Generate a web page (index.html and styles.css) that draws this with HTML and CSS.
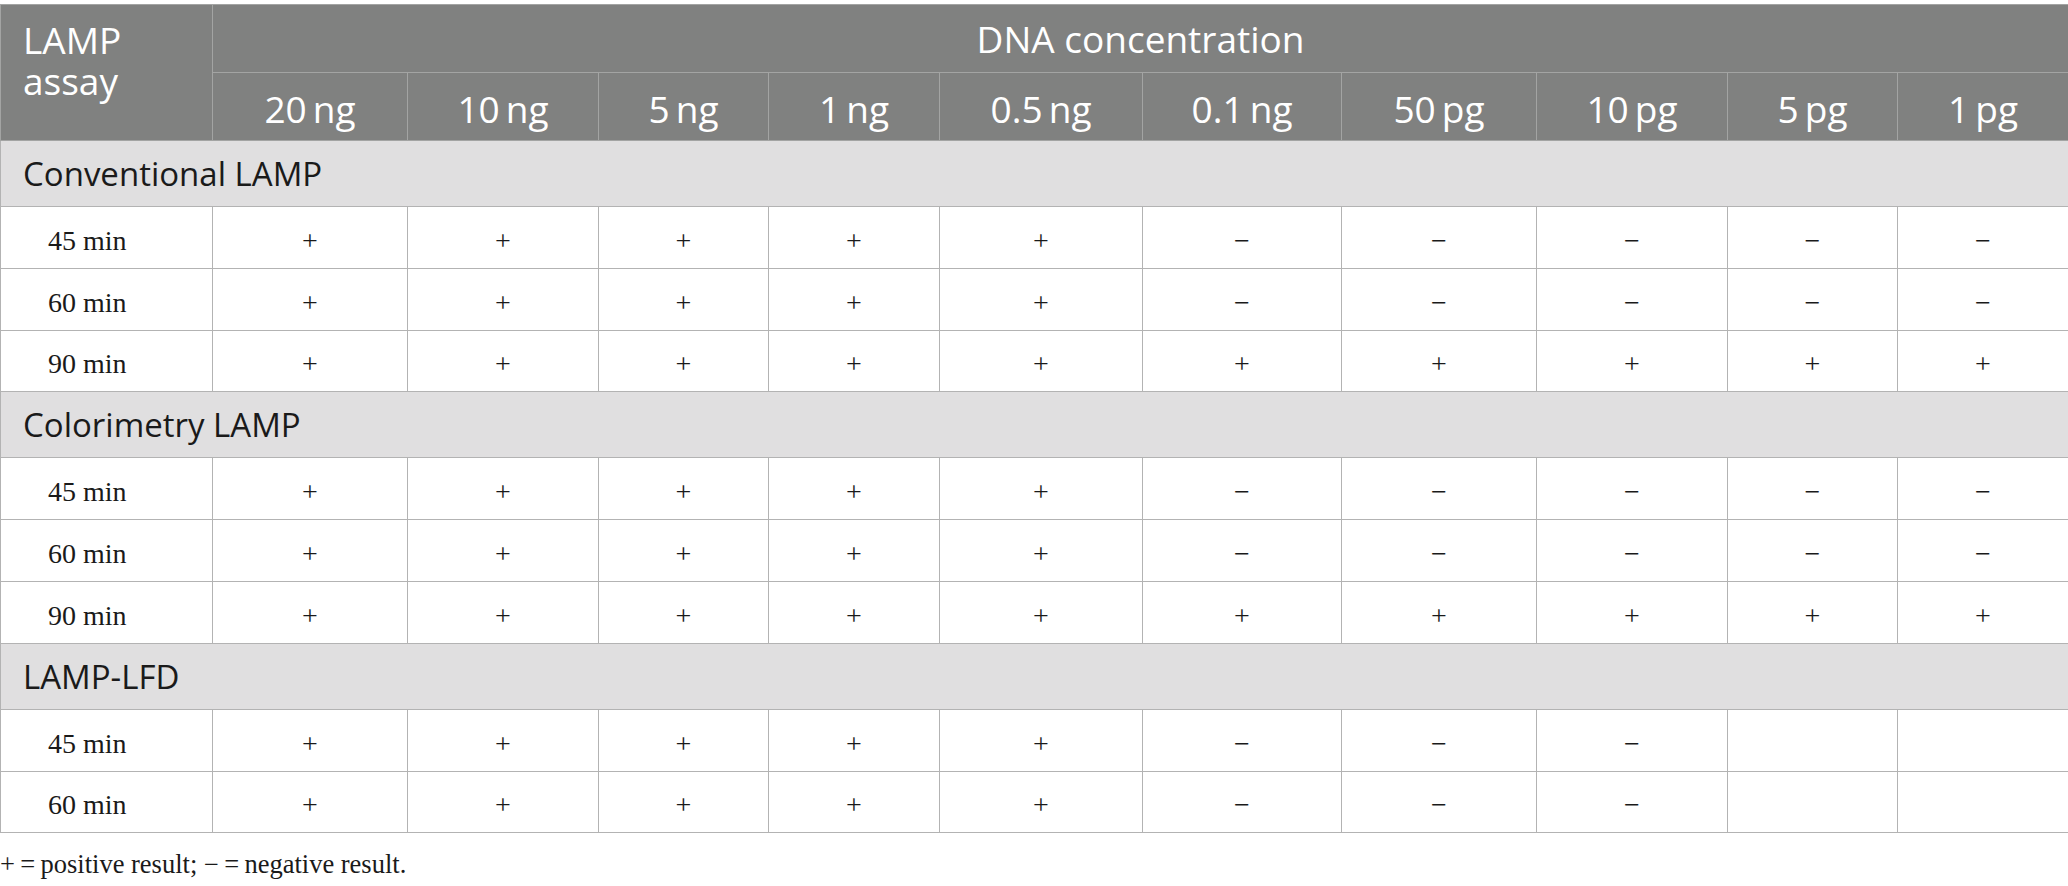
FILE: index.html
```html
<!DOCTYPE html>
<html lang="en">
<head>
<meta charset="utf-8">
<title>LAMP assay sensitivity</title>
<link rel="stylesheet" href="styles.css">
</head>
<body>
<div class="wrap">
<table class="tbl">
  <colgroup>
    <col class="c0"><col class="c1"><col class="c2"><col class="c3"><col class="c4"><col class="c5"><col class="c6"><col class="c7"><col class="c8"><col class="c9"><col class="c10">
  </colgroup>
  <thead>
    <tr class="h1">
      <th rowspan="2" class="corner"><span class="ln">LAMP</span><span class="ln">assay</span></th>
      <th colspan="10" class="span">DNA concentration</th>
    </tr>
    <tr class="h2">
      <th>20&#8201;ng</th><th>10&#8201;ng</th><th>5&#8201;ng</th><th>1&#8201;ng</th><th>0.5&#8201;ng</th><th>0.1&#8201;ng</th><th>50&#8201;pg</th><th>10&#8201;pg</th><th>5&#8201;pg</th><th>1&#8201;pg</th>
    </tr>
  </thead>
  <tbody>
    <tr class="sec"><td colspan="11">Conventional LAMP</td></tr>
    <tr class="row"><td class="lbl">45 min</td><td>+</td><td>+</td><td>+</td><td>+</td><td>+</td><td>&minus;</td><td>&minus;</td><td>&minus;</td><td>&minus;</td><td>&minus;</td></tr>
    <tr class="row"><td class="lbl">60 min</td><td>+</td><td>+</td><td>+</td><td>+</td><td>+</td><td>&minus;</td><td>&minus;</td><td>&minus;</td><td>&minus;</td><td>&minus;</td></tr>
    <tr class="row"><td class="lbl">90 min</td><td>+</td><td>+</td><td>+</td><td>+</td><td>+</td><td>+</td><td>+</td><td>+</td><td>+</td><td>+</td></tr>
    <tr class="sec"><td colspan="11">Colorimetry LAMP</td></tr>
    <tr class="row"><td class="lbl">45 min</td><td>+</td><td>+</td><td>+</td><td>+</td><td>+</td><td>&minus;</td><td>&minus;</td><td>&minus;</td><td>&minus;</td><td>&minus;</td></tr>
    <tr class="row"><td class="lbl">60 min</td><td>+</td><td>+</td><td>+</td><td>+</td><td>+</td><td>&minus;</td><td>&minus;</td><td>&minus;</td><td>&minus;</td><td>&minus;</td></tr>
    <tr class="row"><td class="lbl">90 min</td><td>+</td><td>+</td><td>+</td><td>+</td><td>+</td><td>+</td><td>+</td><td>+</td><td>+</td><td>+</td></tr>
    <tr class="sec"><td colspan="11">LAMP-LFD</td></tr>
    <tr class="row"><td class="lbl">45 min</td><td>+</td><td>+</td><td>+</td><td>+</td><td>+</td><td>&minus;</td><td>&minus;</td><td>&minus;</td><td></td><td></td></tr>
    <tr class="row"><td class="lbl">60 min</td><td>+</td><td>+</td><td>+</td><td>+</td><td>+</td><td>&minus;</td><td>&minus;</td><td>&minus;</td><td></td><td></td></tr>
  </tbody>
</table>
<p class="note">+&#8201;=&#8201;positive result; &minus;&#8201;=&#8201;negative result.</p>
</div>
</body>
</html>
```

FILE: styles.css
```css
html, body {
  margin: 0;
  padding: 0;
  background: #ffffff;
}

.wrap {
  padding-top: 4px;
}

.tbl {
  width: 2068px;
  table-layout: fixed;
  border-collapse: collapse;
  font-family: "Open Sans", "Noto Sans", sans-serif;
}

.c0 { width: 212px; }
.c1 { width: 195px; }
.c2 { width: 191px; }
.c3 { width: 170px; }
.c4 { width: 171px; }
.c5 { width: 203px; }
.c6 { width: 199px; }
.c7 { width: 195px; }
.c8 { width: 191px; }
.c9 { width: 170px; }
.c10 { width: 171px; }

.tbl th {
  background: #808180;
  color: #ffffff;
  font-weight: 400;
  font-size: 37px;
  border: 1px solid #a3a4a3;
  padding: 0;
  text-align: center;
  vertical-align: middle;
}

.h1 { height: 68px; }
.h2 { height: 68px; }

.tbl th.corner {
  text-align: left;
  vertical-align: top;
  padding: 14px 0 0 22px;
}

.corner .ln {
  display: block;
  height: 41px;
  line-height: 41px;
}

.h2 th {
  padding-top: 4px;
}

.sec { height: 66px; }

.sec td {
  background: #e0dfe0;
  color: #1a1a1a;
  font-family: "Open Sans", "Noto Sans", sans-serif;
  font-size: 33px;
  padding: 0 0 0 22px;
  border: 1px solid #b3b3b3;
  text-align: left;
  vertical-align: middle;
}

.row { height: 61.8px; }

.row td {
  font-family: "Liberation Serif", "Times New Roman", serif;
  font-size: 28px;
  color: #1a1a1a;
  text-align: center;
  vertical-align: middle;
  border: 1px solid #b3b3b3;
  padding: 7px 0 0 0;
}

.row td.lbl {
  text-align: left;
  padding-left: 47px;
}

.note {
  margin: 16px 0 0 0;
  font-family: "Liberation Serif", "Times New Roman", serif;
  font-size: 26.5px;
  color: #1a1a1a;
}
```
